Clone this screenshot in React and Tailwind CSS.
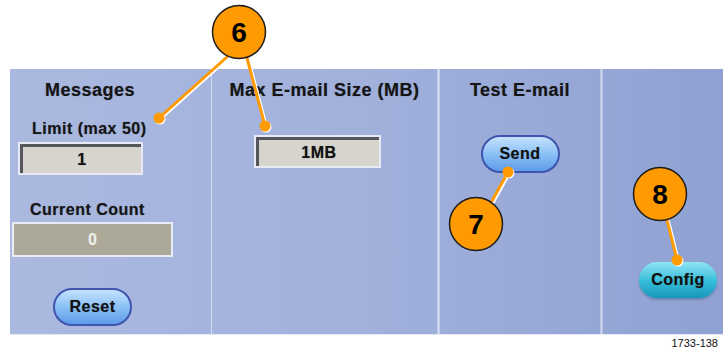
const font = { fontFamily: '"Liberation Sans", Arial, sans-serif' };

function PillButton({ label, cyan }) {
  return (
    <div
      className={
        cyan
          ? "w-[78px] h-[36px] rounded-full flex items-center justify-center bg-gradient-to-b from-[#8fe4f4] via-[#38c0dc] to-[#1597bb] shadow-[0_2px_2px_rgba(40,80,120,0.35)]"
          : "w-[79px] h-[38px] rounded-full flex items-center justify-center border-2 border-[#4053ae] bg-gradient-to-b from-[#c3e2fd] via-[#8cc1f6] to-[#5d9ce9]"
      }
    >
      <span className="text-[16px] font-bold tracking-[0.5px] text-[#111] [text-shadow:0_0_1px_rgba(0,0,0,0.4)]">{label}</span>
    </div>
  );
}

function Field({ value, dark, className }) {
  if (dark) {
    return (
      <div className={"h-[35px] border-2 border-[#e9ecf6] bg-[#aca999] flex items-center justify-center " + className}>
        <span className="text-[16px] font-bold text-[#f2f2ee]">{value}</span>
      </div>
    );
  }
  return (
    <div className={"border-2 border-[#e7eaf5] " + className}>
      <div className="h-full border-t-[3px] border-l-[3px] border-[#55565c] bg-[#d7d4cd] flex items-center justify-center">
        <span className="text-[16px] font-bold tracking-[0.5px] text-[#111] [text-shadow:0_0_1px_rgba(0,0,0,0.4)]">{value}</span>
      </div>
    </div>
  );
}

function Callouts() {
  const line = (x1, y1, x2, y2) => (
    <g>
      <line x1={x1 + 1.5} y1={y1 + 1} x2={x2 + 1.5} y2={y2 + 1} stroke="#ffffff" strokeWidth="3" strokeLinecap="round" />
      <line x1={x1} y1={y1} x2={x2} y2={y2} stroke="#ff9a00" strokeWidth="3" strokeLinecap="round" />
    </g>
  );
  const dot = (x, y) => (
    <g>
      <circle cx={x + 1} cy={y + 1} r="5.5" fill="#ffffff" />
      <circle cx={x} cy={y} r="5.5" fill="#ff9a00" />
    </g>
  );
  const bubble = (x, y, n) => (
    <g>
      <circle cx={x} cy={y} r="26.5" fill="#ff9a00" stroke="#1c1c1c" strokeWidth="1.5" />
      <text x={x} y={y + 10} textAnchor="middle" fontSize="28" fontWeight="bold" fill="#000" style={font}>
        {n}
      </text>
    </g>
  );
  return (
    <svg className="absolute inset-0 pointer-events-none" width="723" height="357">
      {line(227, 57, 159, 118)}
      {line(247, 58, 265, 126)}
      {dot(159, 118)}
      {dot(265, 126)}
      {line(492, 201, 508, 172)}
      {dot(508, 172)}
      {line(667, 220, 677, 260)}
      {dot(677, 260)}
      {bubble(239, 32, "6")}
      {bubble(476, 224, "7")}
      {bubble(660, 194, "8")}
    </svg>
  );
}

export default function App() {
  const head = "text-[18px] font-bold tracking-[0.5px] leading-[20px] [text-shadow:0_0_1px_rgba(0,0,0,0.4)]";
  const sub = "text-[16px] font-bold tracking-[0.5px] leading-[18px] [text-shadow:0_0_1px_rgba(0,0,0,0.4)]";
  return (
    <div className="relative w-[723px] h-[357px] bg-white overflow-hidden" style={font}>
      <div className="pt-[69px] pl-[10px]">
        <div className="h-[266px] flex bg-gradient-to-r from-[#abb9e0] via-[#a1b1dc] to-[#8fa1d2] border-b border-[#e4e8f5] text-[#151515]">
          {/* Messages */}
          <div className="w-[202px] flex flex-col border-r border-[#d2daf1]">
            <div className={"mt-[11px] ml-[35px] " + head}>Messages</div>
            <div className={"mt-[20px] ml-[22px] " + sub}>Limit (max 50)</div>
            <Field value="1" className="mt-[4px] ml-[8px] w-[125px] h-[33px]" />
            <div className={"mt-[26px] ml-[20px] " + sub}>Current Count</div>
            <Field value="0" dark className="mt-[3px] ml-[2px] w-[161px]" />
            <div className="mt-[31px] ml-[43px]">
              <PillButton label="Reset" />
            </div>
          </div>
          {/* Max E-mail Size */}
          <div className="w-[225px] flex flex-col items-center">
            <div className={"mt-[11px] whitespace-nowrap " + head}>Max E-mail Size (MB)</div>
            <Field value="1MB" className="mt-[35px] mr-[14px] w-[127px] h-[33px]" />
          </div>
          <div className="w-[3px] bg-gradient-to-r from-[#bcc7e8] via-[#d3dbf2] to-[#bcc7e8]" />
          {/* Test E-mail */}
          <div className="w-[160px] flex flex-col items-center">
            <div className={"mt-[11px] " + head}>Test E-mail</div>
            <div className="mt-[35px]">
              <PillButton label="Send" />
            </div>
          </div>
          <div className="w-[3px] bg-gradient-to-r from-[#b4c0e4] via-[#cbd4ef] to-[#b4c0e4]" />
          {/* Config */}
          <div className="flex-1 flex flex-col">
            <div className="mt-[193px] ml-[36px]">
              <PillButton label="Config" cyan />
            </div>
          </div>
        </div>
      </div>
      <div className="flex justify-end pr-[5px] pt-[1px]">
        <span className="text-[11px] text-[#111] leading-[14px]">1733-138</span>
      </div>
      <Callouts />
    </div>
  );
}
